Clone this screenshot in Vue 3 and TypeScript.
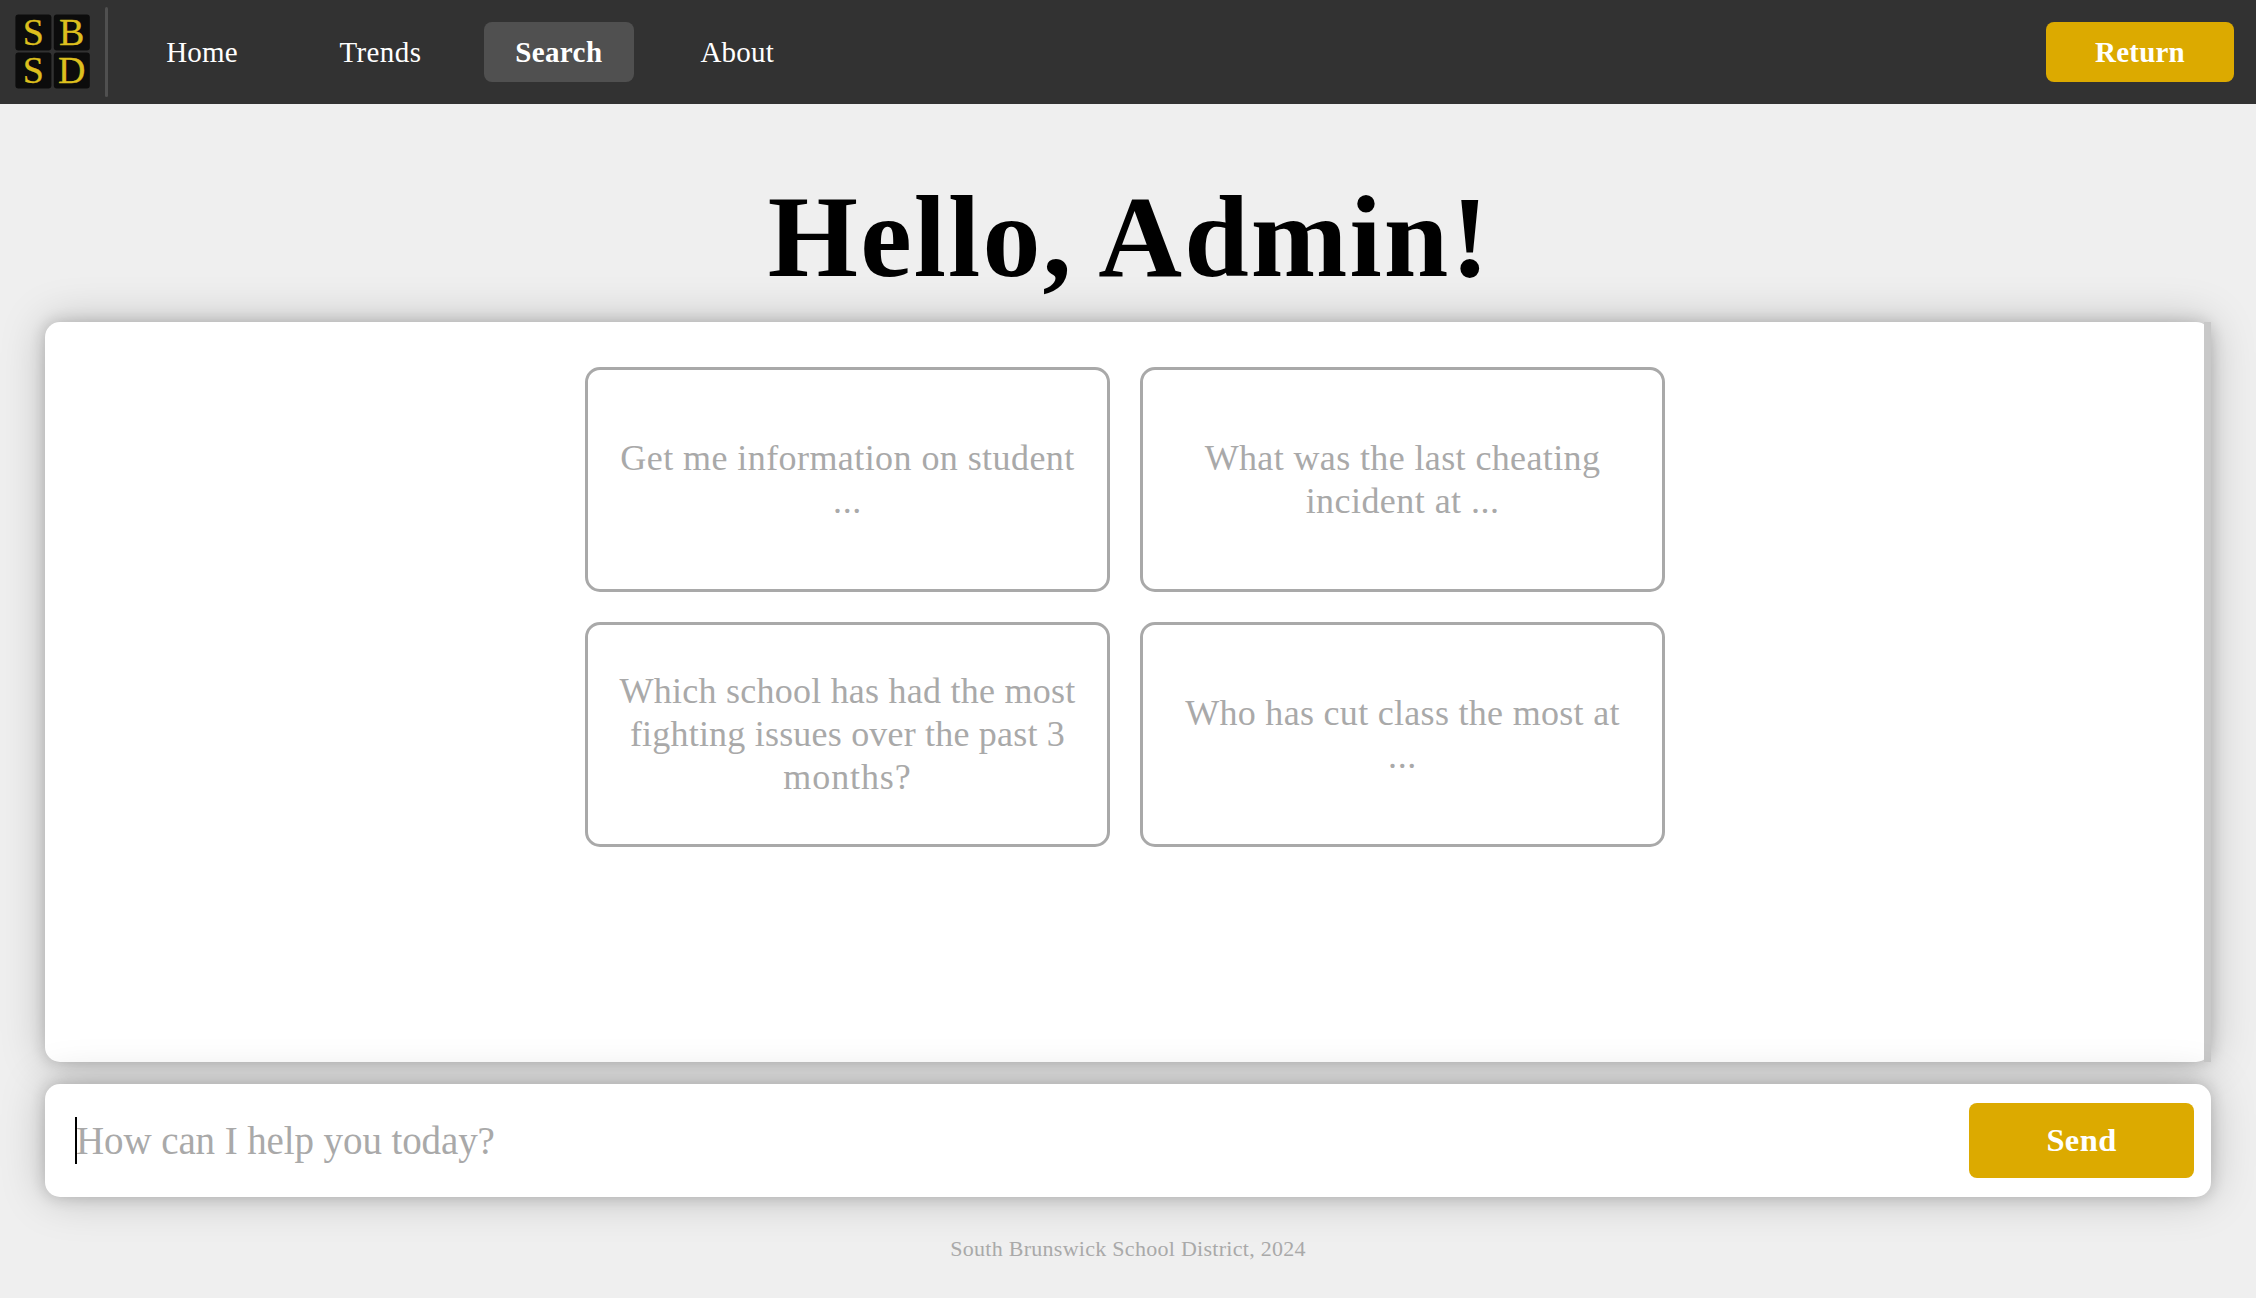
<script setup lang="ts">
interface NavLink {
  label: string
  tracking: number
  active?: boolean
}

interface SuggestionLine {
  text: string
  tracking: number
}

const links: NavLink[] = [
  { label: 'Home', tracking: 0.2 },
  { label: 'Trends', tracking: 0.4 },
  { label: 'Search', tracking: 0.4, active: true },
  { label: 'About', tracking: 0.2 },
]

const suggestions: SuggestionLine[][] = [
  [
    { text: 'Get me information on student', tracking: 0.43 },
    { text: '...', tracking: 0.7 },
  ],
  [
    { text: 'What was the last cheating', tracking: 0.38 },
    { text: 'incident at ...', tracking: 0.45 },
  ],
  [
    { text: 'Which school has had the most', tracking: 0.24 },
    { text: 'fighting issues over the past 3', tracking: 0.2 },
    { text: 'months?', tracking: 0.9 },
  ],
  [
    { text: 'Who has cut class the most at', tracking: 0.3 },
    { text: '...', tracking: 0.7 },
  ],
]
</script>

<template>
  <div class="page">
    <header class="topbar">
      <svg class="logo" viewBox="0 0 75 75" role="img" aria-label="SBSD">
        <g class="tiles">
          <rect x="0.4" y="0.4" width="36" height="36" rx="3" />
          <rect x="38.8" y="0.4" width="36" height="36" rx="3" />
          <rect x="0.4" y="38.6" width="36" height="36" rx="3" />
          <rect x="38.8" y="38.6" width="36" height="36" rx="3" />
        </g>
        <g class="letters">
          <text x="18.4" y="31.3">S</text>
          <text x="56.6" y="31.3">B</text>
          <text x="18.4" y="68.8">S</text>
          <text x="56.8" y="68.8">D</text>
        </g>
      </svg>
      <span class="divider"></span>
      <nav class="links">
        <a
          v-for="link in links"
          :key="link.label"
          class="link"
          :class="{ active: link.active }"
          :style="{ letterSpacing: link.tracking + 'px' }"
        >{{ link.label }}</a>
      </nav>
      <button class="return">Return</button>
    </header>

    <h1 class="title">Hello, Admin!</h1>

    <main class="panel">
      <div class="suggestions">
        <div v-for="(lines, i) in suggestions" :key="i" class="suggestion">
          <span
            v-for="line in lines"
            :key="line.text"
            :style="{ letterSpacing: line.tracking + 'px' }"
          >{{ line.text }}</span>
        </div>
      </div>
      <div class="scrolltrack"></div>
    </main>

    <section class="composer">
      <div class="field">
        <span class="caret"></span>
        <span>How can I help you today?</span>
      </div>
      <button class="send">Send</button>
    </section>

    <footer class="footer">South Brunswick School District, 2024</footer>
  </div>
</template>

<style>
body {
  margin: 0;
  background: #efefef;
}
</style>

<style scoped>
.page {
  display: flex;
  flex-direction: column;
  box-sizing: border-box;
  height: 1298px;
  overflow: hidden;
  background: #efefef;
  font-family: "Liberation Serif", "Times New Roman", serif;
}

button {
  border: 0;
  border-radius: 8px;
  background: #dcaa00;
  color: #fff;
  font-family: inherit;
  font-weight: 700;
  padding: 0;
}

.topbar {
  display: flex;
  align-items: center;
  flex: none;
  box-sizing: border-box;
  height: 104px;
  padding: 0 22px 0 15px;
  background: #323232;
}

.logo {
  width: 75px;
  height: 75px;
  margin-top: -1px;
  overflow: visible;
}

.tiles {
  fill: #0c0c0c;
}

.letters {
  fill: #dcbf1e;
  stroke: #dcbf1e;
  stroke-width: 0.3px;
  font-size: 38px;
  text-anchor: middle;
}

.divider {
  width: 3px;
  height: 90px;
  margin-left: 15px;
  border-radius: 2px;
  background: #505050;
}

.links {
  display: flex;
  gap: 28.4px;
  margin-left: 19px;
}

.link {
  width: 150px;
  height: 60px;
  border-radius: 8px;
  color: #fff;
  font-size: 29px;
  line-height: 60px;
  text-align: center;
}

.link.active {
  background: #505050;
  font-weight: 700;
}

.return {
  width: 188px;
  height: 60px;
  margin-left: auto;
  font-size: 29px;
  letter-spacing: 0.2px;
}

.title {
  flex: none;
  height: 170px;
  margin: 48px 0 0;
  padding-left: 3px;
  color: #000;
  font-size: 116px;
  font-weight: 700;
  line-height: 170px;
  letter-spacing: 2.1px;
  text-align: center;
}

.panel {
  display: flex;
  flex: none;
  justify-content: space-between;
  width: 2166px;
  height: 740px;
  margin: 0 45px;
  border-radius: 15px;
  background: #fff;
  box-shadow: 0 0 15px rgba(0, 0, 0, 0.19), 0 0 45px rgba(0, 0, 0, 0.21);
}

.suggestions {
  display: grid;
  grid-template-columns: 525px 525px;
  grid-template-rows: 225px 225px;
  gap: 30px;
  box-sizing: border-box;
  width: 2159px;
  padding: 45px 0 0 540px;
}

.scrolltrack {
  width: 7px;
  background: #c8c8c8;
}

.suggestion {
  display: flex;
  flex-direction: column;
  align-items: center;
  justify-content: center;
  box-sizing: border-box;
  border: 3px solid #a9a9a9;
  border-radius: 15px;
  color: #a9a9a9;
  font-size: 36px;
  line-height: 43px;
  white-space: nowrap;
}

.composer {
  display: flex;
  flex: none;
  align-items: center;
  justify-content: space-between;
  box-sizing: border-box;
  height: 113px;
  margin: 22px 45px 0;
  padding: 0 17px 0 31px;
  border-radius: 15px;
  background: #fff;
  box-shadow: 0 0 15px rgba(0, 0, 0, 0.19), 0 0 45px rgba(0, 0, 0, 0.21);
}

.field {
  position: relative;
  color: #a9a9a9;
  font-size: 39px;
  line-height: 47px;
  letter-spacing: -0.1px;
}

.caret {
  position: absolute;
  top: 0;
  left: -1px;
  width: 2px;
  height: 47px;
  background: #000;
}

.send {
  width: 225px;
  height: 75px;
  font-size: 32.5px;
  letter-spacing: 0.4px;
}

.footer {
  margin-top: 39px;
  color: #a9a9a9;
  font-size: 22px;
  line-height: 26px;
  letter-spacing: 0.28px;
  text-align: center;
}
</style>
